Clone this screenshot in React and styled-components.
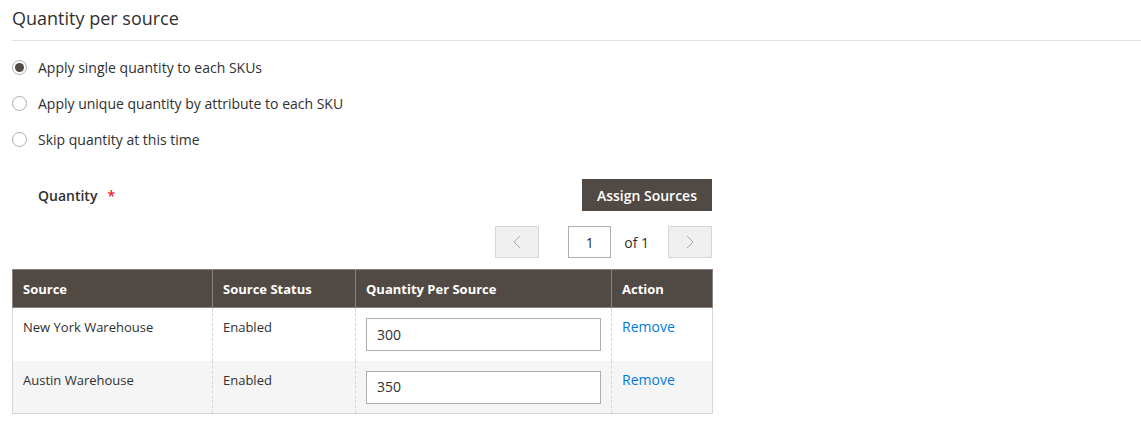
import React from "react";
import styled, { createGlobalStyle } from "styled-components";

const Global = createGlobalStyle`
  html, body { margin: 0; padding: 0; background: #fff; }
  body { font-family: "Open Sans", "Liberation Sans", sans-serif; color: #303030; }
  * { box-sizing: border-box; }
`;

const Page = styled.div`
  padding-left: 12px;
`;

const Title = styled.h2`
  margin: 0;
  padding: 6px 0 10px;
  font-size: 18px;
  line-height: 24px;
  font-weight: 400;
  color: #303030;
  border-bottom: 1px solid #e3e3e3;
`;

const RadioList = styled.div`
  margin-top: 8px;
  display: flex;
  flex-direction: column;
`;

const RadioRow = styled.label`
  height: 36px;
  display: flex;
  align-items: center;
  font-size: 14px;
  color: #303030;
`;

const RadioCircle = styled.span`
  width: 15px;
  height: 15px;
  border-radius: 50%;
  border: 1px solid #adadad;
  background: #fff;
  display: flex;
  align-items: center;
  justify-content: center;
  margin-right: 11px;
  &::after {
    content: "";
    width: 9px;
    height: 9px;
    border-radius: 50%;
    background: ${(p) => (p.$checked ? "#514943" : "transparent")};
  }
`;

const FieldRow = styled.div`
  margin-top: 22px;
  width: 700px;
  height: 32px;
  display: flex;
  align-items: center;
  justify-content: space-between;
`;

const Label = styled.div`
  padding-left: 26px;
  font-size: 14px;
  font-weight: 600;
  color: #303030;
  display: flex;
  align-items: center;
`;

const Required = styled.span`
  color: #e22626;
  margin-left: 10px;
  font-size: 14px;
  font-weight: 600;
`;

const PrimaryButton = styled.button`
  height: 32px;
  padding: 0 15px;
  border: 0;
  background: #514943;
  color: #fff;
  font-family: inherit;
  font-size: 14px;
  font-weight: 600;
`;

const Pager = styled.div`
  margin-top: 15px;
  width: 700px;
  height: 32px;
  display: flex;
  justify-content: flex-end;
  align-items: center;
`;

const PagerButton = styled.button`
  width: 44px;
  height: 32px;
  background: #f0f0f0;
  border: 1px solid #d6d6d6;
  display: flex;
  align-items: center;
  justify-content: center;
  padding: 0;
  margin-left: ${(p) => p.$ml || 0}px;
`;

const PageInput = styled.div`
  margin-left: 29px;
  width: 43px;
  height: 32px;
  border: 1px solid #adadad;
  display: flex;
  align-items: center;
  justify-content: center;
  font-size: 14px;
  color: #303030;
`;

const PageTotal = styled.span`
  margin-left: 13px;
  font-size: 14px;
  color: #303030;
`;

const Table = styled.table`
  margin-top: 11px;
  width: 700px;
  border-collapse: collapse;
  table-layout: fixed;
  font-size: 13px;
`;

const Th = styled.th`
  height: 38px;
  padding: 0 10px;
  background: #514943;
  color: #fff;
  font-weight: 700;
  text-align: left;
  border: 1px solid #8a837f;
`;

const Tr = styled.tr`
  background: ${(p) => (p.$alt ? "#f5f5f5" : "#fff")};
`;

const Td = styled.td`
  height: 53px;
  padding: 10px 10px 0 10px;
  vertical-align: top;
  line-height: 18px;
  color: #303030;
  border-left: 1px dashed #d6d6d6;
  border-bottom: ${(p) => (p.$last ? "1px solid #d6d6d6" : "0")};
  &:first-child { border-left: 1px solid #d6d6d6; }
  &:last-child { border-right: 1px solid #d6d6d6; }
`;

const QtyInput = styled.div`
  width: 235px;
  height: 33px;
  border: 1px solid #adadad;
  background: #fff;
  padding-left: 10px;
  display: flex;
  align-items: center;
  font-size: 14px;
  color: #303030;
`;

const Link = styled.a`
  color: #007bdb;
  text-decoration: none;
  font-size: 14px;
`;

const Chevron = ({ dir }) => (
  <svg width="8" height="14" viewBox="0 0 8 14">
    <polyline
      points={dir === "left" ? "7,1 1,7 7,13" : "1,1 7,7 1,13"}
      fill="none"
      stroke="#a9a9a9"
      strokeWidth="1"
    />
  </svg>
);

const rows = [
  { name: "New York Warehouse", status: "Enabled", qty: "300" },
  { name: "Austin Warehouse", status: "Enabled", qty: "350" },
];

export default function App() {
  return (
    <Page>
      <Global />
      <Title>Quantity per source</Title>
      <RadioList>
        <RadioRow><RadioCircle $checked />Apply single quantity to each SKUs</RadioRow>
        <RadioRow><RadioCircle />Apply unique quantity by attribute to each SKU</RadioRow>
        <RadioRow><RadioCircle />Skip quantity at this time</RadioRow>
      </RadioList>
      <FieldRow>
        <Label>Quantity<Required>*</Required></Label>
        <PrimaryButton>Assign Sources</PrimaryButton>
      </FieldRow>
      <Pager>
        <PagerButton><Chevron dir="left" /></PagerButton>
        <PageInput>1</PageInput>
        <PageTotal>of 1</PageTotal>
        <PagerButton $ml={19}><Chevron dir="right" /></PagerButton>
      </Pager>
      <Table>
        <colgroup>
          <col style={{ width: 200 }} />
          <col style={{ width: 143 }} />
          <col style={{ width: 256 }} />
          <col style={{ width: 101 }} />
        </colgroup>
        <thead>
          <tr>
            <Th>Source</Th>
            <Th>Source Status</Th>
            <Th>Quantity Per Source</Th>
            <Th>Action</Th>
          </tr>
        </thead>
        <tbody>
          {rows.map((r, i) => (
            <Tr key={r.name} $alt={i % 2 === 1}>
              <Td $last={i === rows.length - 1}>{r.name}</Td>
              <Td $last={i === rows.length - 1}>{r.status}</Td>
              <Td $last={i === rows.length - 1}><QtyInput>{r.qty}</QtyInput></Td>
              <Td $last={i === rows.length - 1}><Link href="#">Remove</Link></Td>
            </Tr>
          ))}
        </tbody>
      </Table>
    </Page>
  );
}
